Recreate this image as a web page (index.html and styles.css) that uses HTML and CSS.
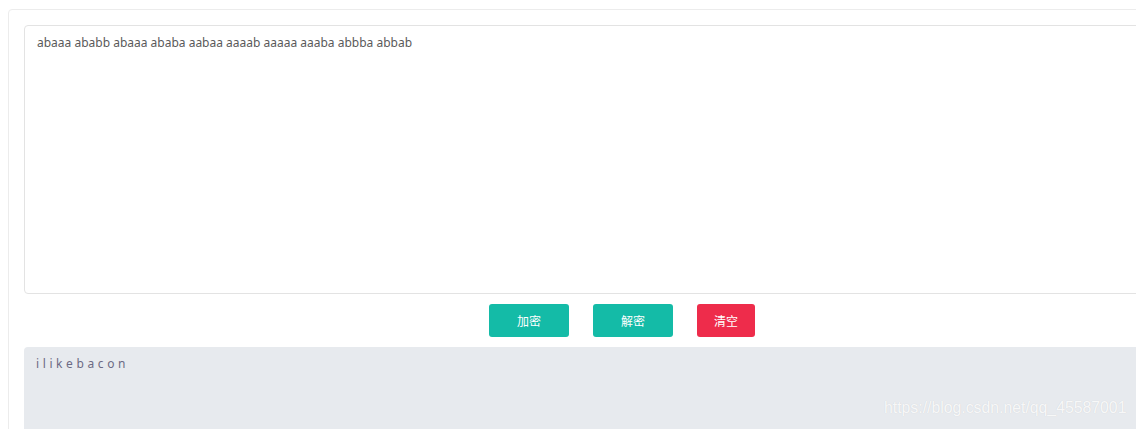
FILE: index.html
```html
<!DOCTYPE html>
<html lang="zh-CN">
<head>
    <meta charset="UTF-8">
    <title>培根密码</title>
    <link rel="stylesheet" href="styles.css">
</head>
<body>

<main class="card">
    <textarea class="input" spellcheck="false">abaaa ababb abaaa ababa aabaa aaaab aaaaa aaaba abbba abbab</textarea>
    <div class="actions">
        <button class="btn btn-ok">加密</button>
        <button class="btn btn-ok">解密</button>
        <button class="btn btn-danger">清空</button>
    </div>
    <div class="output">ilikebacon</div>
</main>

<div class="mark">https://blog.csdn.net/qq_45587001</div>

</body>
</html>
```

FILE: styles.css
```css
html, body {
    margin: 0;
    padding: 0;
    overflow: hidden;
    background: #fff;
}
body {
    padding: 9px 0 0 8px;
    font-family: "Noto Sans", "Noto Sans CJK SC", sans-serif;
    width: 1400px;
    height: 429px;
}

.card {
    width: 1228px;
    border: 1px solid #ececec;
    border-radius: 4px;
    padding: 15px;
    box-sizing: border-box;
    height: 460px;
}

.input {
    display: block;
    width: 100%;
    height: 269px;
    box-sizing: border-box;
    border: 1px solid #e3e3e3;
    border-radius: 4px;
    padding: 8px 12px;
    margin: 0;
    resize: none;
    outline: none;
    font-family: "Noto Sans", "Noto Sans CJK SC", sans-serif;
    font-size: 12px;
    line-height: 18px;
    color: #5a5a5a;
}

.actions {
    display: flex;
    justify-content: center;
    gap: 24px;
    padding: 10px 0;
}

.btn {
    height: 33px;
    padding: 0 16px;
    border: none;
    border-radius: 3px;
    color: #fff;
    font-family: "Noto Sans CJK SC", sans-serif;
    font-size: 12px;
}
.btn-ok {
    width: 80px;
    background-color: #14bba7;
}
.btn-danger {
    width: 58px;
    padding: 0;
    background-color: #ee2c4b;
}

.output {
    height: 120px;
    background-color: #e7eaee;
    border-radius: 4px 4px 0 0;
    padding: 8px 12px;
    font-size: 12px;
    line-height: 18px;
    letter-spacing: 3.6px;
    color: #6c6a84;
}

.mark {
    position: absolute;
    left: 884px;
    top: 399px;
    font-family: "Liberation Sans", sans-serif;
    font-size: 15.8px;
    color: rgba(255, 255, 255, 0.85);
    text-shadow: 0 0 1px rgba(0, 0, 0, 0.12);
}
```
